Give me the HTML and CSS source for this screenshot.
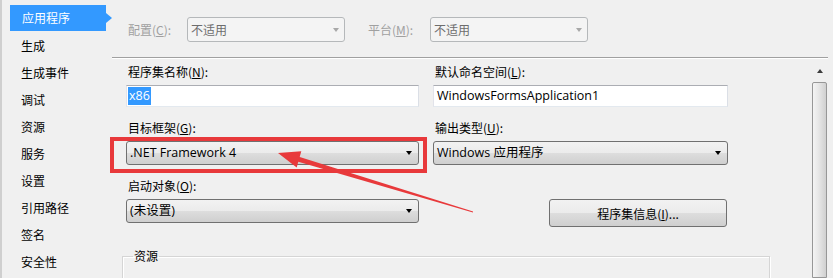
FILE: index.html
```html
<!DOCTYPE html>
<html lang="zh-CN">
<head>
<meta charset="utf-8">
<title>应用程序</title>
<link rel="stylesheet" href="styles.css">
</head>
<body>
<div class="window">
  <nav class="nav">
    <div class="nav-item active">应用程序</div>
    <div class="nav-item">生成</div>
    <div class="nav-item">生成事件</div>
    <div class="nav-item">调试</div>
    <div class="nav-item">资源</div>
    <div class="nav-item">服务</div>
    <div class="nav-item">设置</div>
    <div class="nav-item">引用路径</div>
    <div class="nav-item">签名</div>
    <div class="nav-item">安全性</div>
  </nav>
  <main class="main">
    <div class="toolbar">
      <span class="tb-label tb-cfg">配置(<u>C</u>):</span>
      <div class="combo disabled"><span class="combo-text">不适用</span><i class="caret"></i></div>
      <span class="tb-label tb-plat">平台(<u>M</u>):</span>
      <div class="combo disabled"><span class="combo-text">不适用</span><i class="caret"></i></div>
    </div>
    <div class="content">
      <div class="form">
        <div class="grid">
          <div class="field">
            <label class="lbl">程序集名称(<u>N</u>):</label>
            <div class="textbox tb-sel"><span class="sel">x86</span></div>
          </div>
          <div class="field">
            <label class="lbl">默认命名空间(<u>L</u>):</label>
            <div class="textbox">WindowsFormsApplication1</div>
          </div>
          <div class="field">
            <label class="lbl">目标框架(<u>G</u>):</label>
            <div class="combo enabled"><span class="combo-text">.NET Framework 4</span><i class="caret"></i></div>
          </div>
          <div class="field">
            <label class="lbl">输出类型(<u>U</u>):</label>
            <div class="combo enabled"><span class="combo-text">Windows 应用程序</span><i class="caret"></i></div>
          </div>
          <div class="field">
            <label class="lbl">启动对象(<u>O</u>):</label>
            <div class="combo enabled"><span class="combo-text">(未设置)</span><i class="caret"></i></div>
          </div>
          <button class="btn">程序集信息(<u>I</u>)...</button>
        </div>
        <fieldset class="group"><legend>资源</legend></fieldset>
      </div>
      <div class="scrollbar">
        <div class="sb-up"><i class="sb-arrow"></i></div>
        <div class="sb-thumb"></div>
      </div>
    </div>
  </main>
  <svg class="annot" width="833" height="278" viewBox="0 0 833 278">
    <rect x="112" y="139" width="313" height="32" fill="none" stroke="#e8393b" stroke-width="4"/>
    <polygon fill="#e8393b" points="278,153 301.3,151.3 299.7,157 473.1,211.5 472.9,212.5 298.3,161.8 296.7,167.5"/>
  </svg>
</div>
</body>
</html>
```

FILE: styles.css
```css
* { box-sizing: border-box; }

body {
  margin: 0;
  background: #f0f0f0;
  font-family: "Noto Sans CJK SC", sans-serif;
  font-size: 12px;
  color: #000;
}

.window {
  position: relative;
  display: flex;
  width: 833px;
  height: 278px;
  overflow: hidden;
}

/* left navigation */
.nav {
  flex: none;
  width: 112px;
  border-left: 2px solid #cfcfcf;
  padding-top: 5px;
}

.nav-item {
  position: relative;
  margin-left: 8px;
  width: 96px;
  height: 27px;
  line-height: 27px;
  padding-left: 11px;
  white-space: nowrap;
}

.nav-item.active {
  height: 26px;
  line-height: 26px;
  margin-bottom: 1px;
  background: #3399ff;
  color: #fff;
  padding-left: 12px;
}

.nav-item.active::after {
  content: "";
  position: absolute;
  right: -6px;
  top: 8px;
  border-left: 6px solid #3399ff;
  border-top: 5px solid transparent;
  border-bottom: 5px solid transparent;
}

/* main */
.main {
  flex: 1;
  min-width: 0;
  display: flex;
  flex-direction: column;
}

.toolbar {
  flex: none;
  height: 58px;
  padding: 17px 0 0 16px;
  margin-right: 5px;
  display: flex;
  align-items: flex-start;
  border-bottom: 1px solid #a0a0a0;
  box-shadow: 0 1px 0 #fff;
}

.tb-label {
  line-height: 25px;
  color: #a0a0a0;
  white-space: nowrap;
}

.tb-cfg { width: 59px; }
.tb-plat { width: 62px; margin-left: 23px; }

.combo {
  position: relative;
  display: flex;
  align-items: center;
  border-radius: 3px;
  padding-left: 3px;
  white-space: nowrap;
}

.combo.disabled {
  width: 158px;
  height: 25px;
  background: #f4f4f4;
  border: 1px solid #b5b8ba;
  color: #6d6d6d;
}

.combo.enabled {
  height: 24px;
  border: 1px solid #707070;
  background: linear-gradient(#f2f2f2 0%, #ebebeb 50%, #dddddd 51%, #cfcfcf 100%);
  font-family: "Open Sans", "Noto Sans CJK SC", sans-serif;
  font-size: 12.5px;
}

.combo-text { line-height: 16px; }

.caret {
  position: absolute;
  right: 6px;
  top: 50%;
  margin-top: -2px;
  border-top: 4px solid #000;
  border-left: 3.5px solid transparent;
  border-right: 3.5px solid transparent;
}

.combo.disabled .caret { border-top-color: #a8a8a8; right: 5px; }

/* content */
.content {
  flex: 1;
  min-height: 0;
  display: flex;
}

.form {
  flex: 1;
  min-width: 0;
  padding: 6px 0 0 14px;
}

.grid {
  display: grid;
  grid-template-columns: 293px 295px;
  column-gap: 14px;
  row-gap: 13px;
}

.field {
  display: flex;
  flex-direction: column;
  gap: 5px;
}

.lbl {
  line-height: 16px;
  padding-left: 2px;
  white-space: nowrap;
}

.textbox {
  height: 22px;
  background: #fff;
  border: 1px solid;
  border-color: #abadb3 #dbdfe6 #e3e9ef #e2e3ea;
  padding-left: 3px;
  line-height: 20px;
  font-family: "Open Sans", "Noto Sans CJK SC", sans-serif;
  font-size: 12.5px;
  white-space: nowrap;
}

.tb-sel { padding-left: 1px; padding-top: 1px; line-height: 18px; }

.sel {
  display: inline-block;
  background: #3399ff;
  color: #fff;
  padding: 0 1px;
  line-height: 18px;
}

.btn {
  grid-column: 2;
  justify-self: end;
  align-self: start;
  margin: 21px 1px 0 0;
  width: 178px;
  height: 28px;
  border: 1px solid #707070;
  border-radius: 3px;
  background: linear-gradient(#f2f2f2 0%, #ebebeb 50%, #dddddd 51%, #cfcfcf 100%);
  font-family: "Noto Sans CJK SC", sans-serif;
  font-size: 12px;
  color: #000;
  padding: 0;
}

.group {
  margin: 21px 0 0 -4px;
  width: 648px;
  height: 80px;
  padding: 0 10px;
  border: 1px solid #d5d5d5;
  box-shadow: inset 1px 1px 0 #fff, 1px 1px 0 #fff;
}

.group legend {
  padding: 0 1px;
  line-height: 16px;
}

/* scrollbar */
.scrollbar {
  flex: none;
  width: 15px;
  margin: 5px 6px 0 0;
  display: flex;
  flex-direction: column;
  background: #f0f0f0;
}

.sb-up {
  flex: none;
  height: 19px;
  display: flex;
  align-items: center;
  justify-content: center;
}

.sb-arrow {
  border-bottom: 4px solid #3c3c3c;
  border-left: 3.5px solid transparent;
  border-right: 3.5px solid transparent;
  margin-top: -3px;
}

.sb-thumb {
  flex: 1;
  border: 1px solid #979797;
  border-radius: 2px 2px 0 0;
  background: linear-gradient(to right, #f4f4f4 0%, #e6e6e6 45%, #d0d0d0 100%);
}

/* annotation overlay */
.annot {
  position: absolute;
  left: 0;
  top: 0;
  pointer-events: none;
}
```
